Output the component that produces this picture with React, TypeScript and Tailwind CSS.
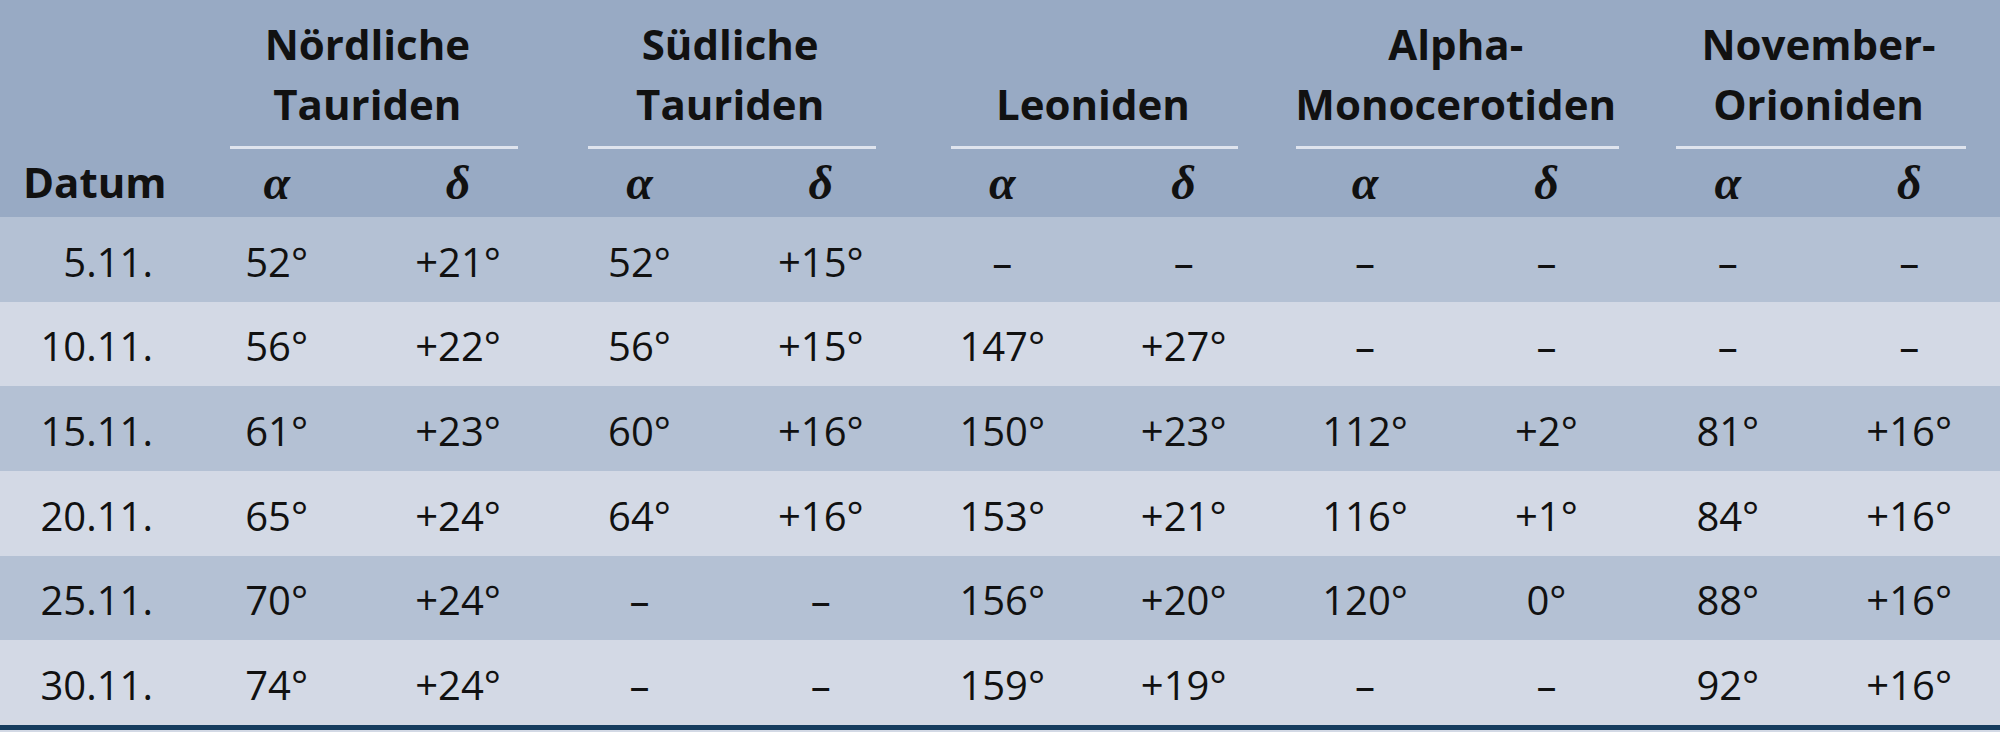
const groups = [
  { lines: ["Nördliche", "Tauriden"], line: "ml-[44px] mr-[31px]" },
  { lines: ["Südliche", "Tauriden"], line: "ml-[39px] mr-[36px]" },
  { lines: ["Leoniden"], line: "ml-[39px] mr-[36px]" },
  { lines: ["Alpha-", "Monocerotiden"], line: "ml-[22px] mr-[18px]" },
  { lines: ["November-", "Orioniden"], line: "ml-[39px] mr-[34px]" },
];

const rows = [
  ["5.11.", "52°", "+21°", "52°", "+15°", "–", "–", "–", "–", "–", "–"],
  ["10.11.", "56°", "+22°", "56°", "+15°", "147°", "+27°", "–", "–", "–", "–"],
  ["15.11.", "61°", "+23°", "60°", "+16°", "150°", "+23°", "112°", "+2°", "81°", "+16°"],
  ["20.11.", "65°", "+24°", "64°", "+16°", "153°", "+21°", "116°", "+1°", "84°", "+16°"],
  ["25.11.", "70°", "+24°", "–", "–", "156°", "+20°", "120°", "0°", "88°", "+16°"],
  ["30.11.", "74°", "+24°", "–", "–", "159°", "+19°", "–", "–", "92°", "+16°"],
];

const cols = "grid grid-cols-[186px_repeat(10,181.4px)]";

export default function App() {
  return (
    <div className="w-[2000px] h-[732px] bg-[#d3d9e5] font-['Open_Sans',sans-serif] text-[#111]">
      <div className="border-b-[5px] border-[#163d5f]">
        {/* header */}
        <div className={`${cols} grid-rows-[149px_68px] bg-[#98aac4]`}>
          <div className="row-start-2 flex items-center pl-[23px] pb-[3px] text-[42px] font-bold">Datum</div>
          {groups.map((g, i) => (
            <div
              key={i}
              className="row-start-1 col-span-2 flex flex-col justify-end"
              style={{ gridColumnStart: 2 + i * 2 }}
            >
              <div className="text-center text-[42px] font-bold leading-[60px] pb-[12px]">
                {g.lines.map((l) => (
                  <div key={l}>{l}</div>
                ))}
              </div>
              <div className={`h-[3px] bg-[#dfe4ee] ${g.line}`} />
            </div>
          ))}
          {groups.map((g, i) =>
            ["α", "δ"].map((s, j) => (
              <div
                key={`${i}-${s}`}
                className="row-start-2 flex items-center justify-center font-['Liberation_Serif',serif] italic font-bold text-[48px]"
                style={{ gridColumnStart: 2 + i * 2 + j }}
              >
                {s}
              </div>
            ))
          )}
        </div>
        {/* body */}
        {rows.map((r, i) => (
          <div key={r[0]} className={`${cols} h-[84.67px] ${i % 2 === 0 ? "bg-[#b4c1d4]" : "bg-[#d3d9e5]"}`}>
            <div className="flex items-center justify-end pt-[5px] pr-[33px] text-[40px]">{r[0]}</div>
            {r.slice(1).map((v, j) => (
              <div key={j} className="flex items-center justify-center pt-[5px] text-[40px]">
                {v}
              </div>
            ))}
          </div>
        ))}
      </div>
    </div>
  );
}
